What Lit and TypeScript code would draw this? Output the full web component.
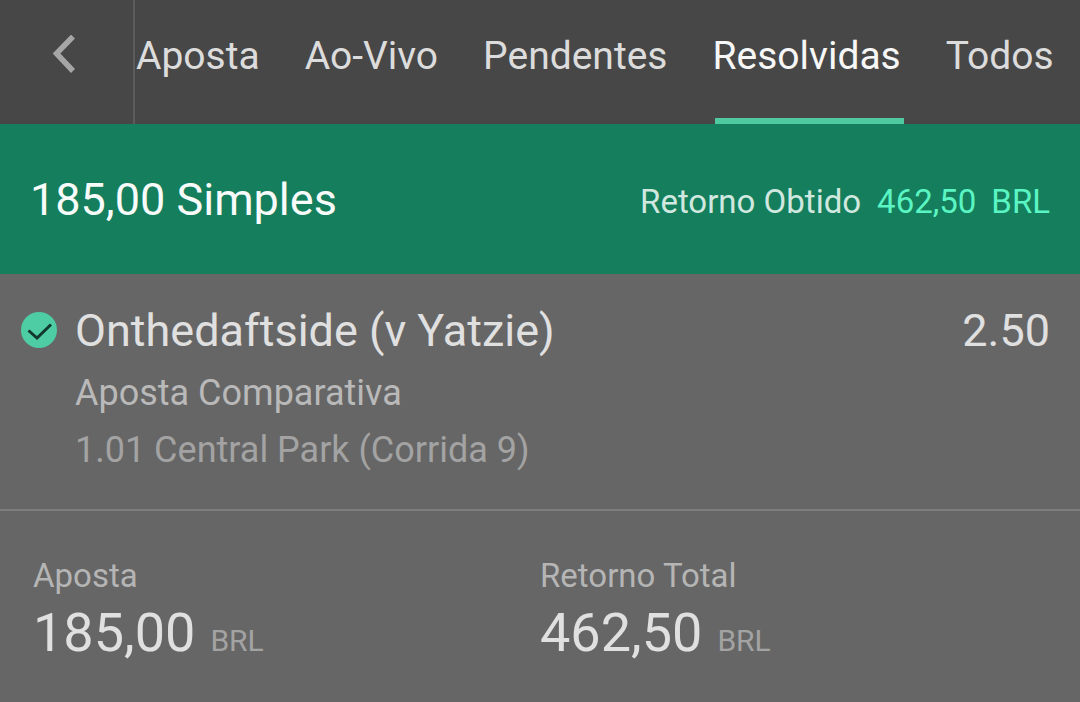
import { LitElement, html, css } from "lit";
import { customElement } from "lit/decorators.js";

const TABS = ["Aposta", "Ao-Vivo", "Pendentes", "Resolvidas", "Todos"];

@customElement("app-root")
class AppRoot extends LitElement {
  static styles = css`
    :host {
      display: block;
      width: 1080px;
      height: 702px;
      overflow: hidden;
      background: #666666;
      font-family: Roboto, "Liberation Sans", sans-serif;
    }
    .nav {
      display: flex;
      height: 124px;
      background: #474747;
      box-sizing: border-box;
    }
    .back {
      width: 135px;
      flex: none;
      display: flex;
      align-items: center;
      box-sizing: border-box;
      padding-left: 52px;
      padding-bottom: 14px;
      border-right: 2px solid #5c5c5c;
      margin-right: 1px;
    }
    .back svg {
      display: block;
    }
    .tabs {
      display: flex;
      gap: 45px;
    }
    .tab {
      position: relative;
      font-size: 39px;
      color: #dcdcdc;
      height: 124px;
      line-height: 112px;
      box-sizing: border-box;
      white-space: nowrap;
    }
    .tab.on {
      color: #f7f7f7;
    }
    .tab.on::after {
      content: "";
      position: absolute;
      left: 2.5px;
      right: -3.5px;
      bottom: 0;
      height: 6px;
      background: #4ec9a0;
    }
    .banner {
      height: 150px;
      background: #147e5d;
      display: flex;
      align-items: center;
      justify-content: space-between;
      padding: 0 30px 0 30px;
    }
    .title {
      font-size: 45px;
      color: #f7fbf9;
    }
    .ret {
      display: flex;
      gap: 16px;
      font-size: 33px;
      color: #d0e8df;
      padding-top: 4px;
    }
    .ret .val {
      color: #5bf5c3;
      display: flex;
      gap: 15px;
    }
    .sel {
      height: 237px;
      box-sizing: border-box;
      border-bottom: 2px solid #7d7d7d;
      padding: 28px 30px 0 21px;
    }
    .row {
      display: flex;
      align-items: center;
      height: 56px;
    }
    .row svg {
      flex: none;
      margin-right: 18px;
    }
    .name {
      flex: 1;
      font-size: 45px;
      color: #e0e0e0;
    }
    .odds {
      font-size: 45px;
      color: #e0e0e0;
    }
    .market {
      font-size: 36px;
      color: #b9b9b9;
      margin: 11px 0 0 54px;
      line-height: 48px;
    }
    .race {
      font-size: 36px;
      color: #a3a3a3;
      margin: 9px 0 0 54px;
      line-height: 48px;
    }
    .totals {
      display: grid;
      grid-template-columns: 507px 1fr;
      padding: 46px 0 0 33px;
    }
    .lbl {
      font-size: 33px;
      color: #b5b5b5;
      line-height: 38px;
    }
    .amt {
      display: flex;
      align-items: baseline;
      gap: 15px;
      font-size: 54px;
      color: #e0e0e0;
      line-height: 76px;
    }
    .amt span {
      font-size: 30px;
      color: #a3a3a3;
    }
  `;

  render() {
    return html`
      <div class="nav">
        <div class="back">
          <svg width="26" height="40" viewBox="0 0 26 40">
            <path d="M21 1.5 L4.5 18.5 L21 36" fill="none" stroke="#a6a6a6" stroke-width="5.5" />
          </svg>
        </div>
        <div class="tabs">
          ${TABS.map(
            (t) => html`<div class="tab ${t === "Resolvidas" ? "on" : ""}">${t}</div>`
          )}
        </div>
      </div>
      <div class="banner">
        <div class="title">185,00 Simples</div>
        <div class="ret">
          <span>Retorno Obtido</span>
          <span class="val"><span>462,50</span><span>BRL</span></span>
        </div>
      </div>
      <div class="sel">
        <div class="row">
          <svg width="36" height="36" viewBox="0 0 36 36">
            <circle cx="18" cy="18" r="18" fill="#4ecda4" />
            <path d="M7.5 18.5 L16 26 L30 12.5" fill="none" stroke="#12382c" stroke-width="3" />
          </svg>
          <div class="name">Onthedaftside (v Yatzie)</div>
          <div class="odds">2.50</div>
        </div>
        <div class="market">Aposta Comparativa</div>
        <div class="race">1.01 Central Park (Corrida 9)</div>
      </div>
      <div class="totals">
        <div>
          <div class="lbl">Aposta</div>
          <div class="amt">185,00 <span>BRL</span></div>
        </div>
        <div>
          <div class="lbl">Retorno Total</div>
          <div class="amt">462,50 <span>BRL</span></div>
        </div>
      </div>
    `;
  }
}

export default AppRoot;
